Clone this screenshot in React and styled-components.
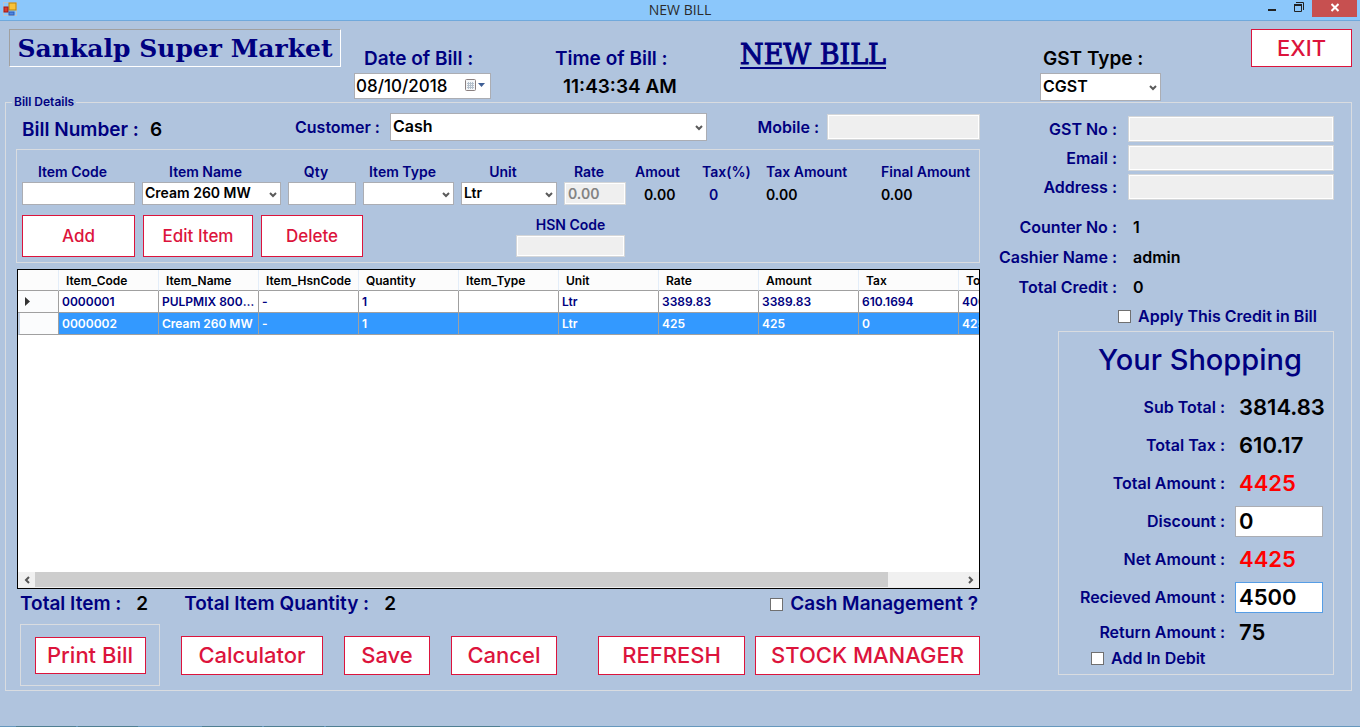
import React from "react";
import styled, { createGlobalStyle } from "styled-components";

const NAVY = "#000080";
const CRIMSON = "#dc143c";
const LINE = "#d9dce0";

const GlobalStyle = createGlobalStyle`
  * { box-sizing: border-box; }
  body { margin: 0; background: #b0c4de; }
  body, button, input, select {
    font-family: Inter, "Liberation Sans", Arial, sans-serif;
    font-weight: 600;
  }
  button, input, select { margin: 0; border-radius: 0; outline: none; }
`;

/* ---------- window frame ---------- */
const Window = styled.div`
  min-height: 100vh;
  min-width: 1200px;
  display: flex;
  flex-direction: column;
  background: #b0c4de;
  color: ${NAVY};
`;
const TitleBar = styled.div`
  height: 21px;
  display: grid;
  grid-template-columns: 1fr auto 1fr;
  background: #8bc7fb;
  border-bottom: 1px solid #70a9dc;
`;
const AppIcon = styled.svg`
  display: block;
  margin: 2px 0 0 3px;
`;
const WindowTitle = styled.span`
  font: 400 14px/20px "Open Sans", "Noto Sans", sans-serif;
  color: #2b2b2b;
`;
const WindowButtons = styled.div`
  justify-self: end;
  display: flex;
  padding-right: 3px;
`;
const WindowButton = styled.button`
  width: ${(p) => (p.$close ? 45 : 27)}px;
  height: 17px;
  padding: 0;
  border: 0;
  display: flex;
  justify-content: center;
  background: ${(p) => (p.$close ? "#c75050" : "transparent")};
`;
const TaskEdge = styled.div`
  height: 1px;
  margin-top: auto;
  background: linear-gradient(
    90deg,
    #6698bd 16px, #4f7f93 16px 76px, #6698bd 76px 78px, #4f7f93 78px 138px,
    #6698bd 138px 202px, #4f7f93 202px 262px, #6698bd 262px 264px,
    #4f7f93 264px 324px, #6698bd 324px 326px, #4f7f93 326px 500px, #6698bd 500px
  );
`;

/* ---------- shared controls ---------- */
const Caption = styled.label`
  font-size: ${(p) => p.$size || 16}px;
  line-height: 20px;
  white-space: nowrap;
  color: ${(p) => (p.$dark ? "#000" : NAVY)};
`;
const Value = styled.output`
  font-size: ${(p) => p.$size || 16}px;
  line-height: 20px;
  white-space: nowrap;
  color: ${(p) => p.$color || "#000"};
`;
const TextBox = styled.input`
  width: ${(p) => (p.$w ? p.$w + "px" : "100%")};
  height: ${(p) => p.$h || 26}px;
  min-width: 0;
  padding: 0 3px;
  border: 1px solid #abadb3;
  background: #fff;
  color: #000;
  font-size: ${(p) => p.$size || 14}px;
  &:disabled {
    border-color: #d4d6d8;
    background: #efefef;
    box-shadow: inset 0 0 0 1px #fff;
    color: #838383;
  }
`;
const FocusBox = styled(TextBox)`
  border-color: #569de5;
`;
const SelectWrap = styled.div`
  position: relative;
  width: ${(p) => (p.$w ? p.$w + "px" : "100%")};
  height: ${(p) => p.$h}px;
`;
const SelectBox = styled.select`
  appearance: none;
  display: block;
  width: 100%;
  height: 100%;
  padding: 0 18px 2px 2px;
  border: 1px solid #abadb3;
  background: #fff;
  color: #000;
  font-size: ${(p) => p.$size}px;
`;
const Chevron = styled.svg`
  position: absolute;
  right: 4px;
  top: calc(50% - 2px);
  pointer-events: none;
`;
const RedButton = styled.button`
  width: ${(p) => p.$w}px;
  height: ${(p) => p.$h || 39}px;
  padding: 0;
  border: 1px solid ${CRIMSON};
  background: #fff;
  color: ${CRIMSON};
  font-size: ${(p) => p.$size || 22}px;
  font-weight: 500;
  white-space: nowrap;
`;
const CheckLabel = styled.label`
  display: flex;
  align-items: center;
  gap: 7px;
  font-size: ${(p) => p.$size || 16}px;
  line-height: 20px;
  white-space: nowrap;
`;
const CheckBox = styled.input`
  appearance: none;
  width: 13px;
  height: 13px;
  border: 1px solid #707070;
  background: #fff;
  &:checked { background: ${NAVY}; }
`;

function Select({ id, w, h, size, value }) {
  return (
    <SelectWrap $w={w} $h={h}>
      <SelectBox id={id} $size={size} defaultValue={value}>
        <option>{value}</option>
      </SelectBox>
      <Chevron width="8" height="6" viewBox="0 0 8 6">
        <path d="M1 1 L4 4 L7 1" fill="none" stroke="#5a5a5a" strokeWidth="2" />
      </Chevron>
    </SelectWrap>
  );
}

function Check({ size, children }) {
  return (
    <CheckLabel $size={size}>
      <CheckBox type="checkbox" />
      {children}
    </CheckLabel>
  );
}

/* ---------- header ---------- */
const Header = styled.header`
  display: flex;
  align-items: flex-start;
  height: 79px;
  padding: 8px 8px 0 9px;
`;
const ShopName = styled.div`
  width: 332px;
  height: 38px;
  border: 1px solid #a0a0a0;
  border-right-color: #fff;
  border-bottom-color: #fff;
  text-align: center;
  font: 700 25px/38px "DejaVu Serif", serif;
  white-space: nowrap;
`;
const HeaderField = styled.div`
  display: flex;
  flex-direction: column;
  padding-top: 20px;
  gap: ${(p) => p.$gap || 4}px;
  margin-left: ${(p) => p.$left};
`;
const Indent = styled.div`
  padding-left: ${(p) => p.$by}px;
  display: flex;
`;
const DateBox = styled.div`
  display: flex;
  align-items: center;
  width: 137px;
  height: 26px;
  border: 1px solid #abadb3;
  background: #fff;
`;
const DateInput = styled.input`
  flex: 1;
  min-width: 0;
  padding: 0 0 0 1px;
  border: 0;
  background: none;
  color: #000;
  font-size: 17px;
  font-weight: 500;
`;
const DateButton = styled.button`
  padding: 0 5px 0 0;
  border: 0;
  background: none;
  display: flex;
`;
const PageTitle = styled.h1`
  margin: 10px 0 0 62px;
  font: 400 27px/32px "DejaVu Serif", serif;
  text-decoration: underline;
  text-decoration-thickness: 2px;
  text-underline-offset: 3px;
  white-space: nowrap;
  -webkit-text-stroke: 1px ${NAVY};
`;
const TimeField = styled(HeaderField)`
  width: 123px;
`;
const ExitSlot = styled.div`
  margin-left: 90px;
`;

/* ---------- bill details ---------- */
const Details = styled.fieldset`
  min-width: 0;
  margin: -5px 8px 0 5px;
  padding: 3px 17px 4px 10px;
  border: 1px solid ${LINE};
`;
const Legend = styled.legend`
  margin-left: -4px;
  padding: 0 2px 0 2px;
  font-size: 12px;
  line-height: 14px;
`;
const Columns = styled.div`
  display: grid;
  grid-template-columns: minmax(0, 1fr) 346px;
  gap: 8px;
`;
const Main = styled.div`
  display: flex;
  flex-direction: column;
  min-width: 0;
`;
const BillRow = styled.div`
  display: flex;
  align-items: center;
  gap: 8px;
  height: 30px;
  padding-left: 6px;
`;
const BillNumber = styled.div`
  display: flex;
  gap: 11px;
  width: 265px;
  padding-top: 6px;
`;
const CustomerCaption = styled(Caption)`
  width: 87px;
`;
const PushRight = styled.div`
  display: flex;
  align-items: center;
  gap: ${(p) => p.$gap || 8}px;
  margin-left: auto;
`;
const Entry = styled.section`
  margin-top: 7px;
  padding: 12px 5px 5px;
  border: 1px solid ${LINE};
`;
const EntryFields = styled.div`
  display: grid;
  grid-template-columns: 113px 139px 68px 91px 96px 62px 60px 57px 108px 1fr;
  gap: 7px;
`;
const EntryField = styled.div`
  display: flex;
  flex-direction: column;
  align-items: ${(p) => (p.$plain ? "flex-start" : "center")};
  min-width: 0;
  ${Caption} {
    padding-right: ${(p) => (p.$plain ? 0 : 12)}px;
    padding-left: ${(p) => (p.$plain ? 2 : 0)}px;
  }
`;
const PlainValue = styled(Value)`
  padding: 3px 0 0 ${(p) => p.$indent || 2}px;
`;
const EntryActions = styled.div`
  display: flex;
  align-items: flex-end;
  gap: 8px;
  margin-top: 10px;
`;
const HsnField = styled.div`
  display: flex;
  flex-direction: column;
  align-items: center;
  width: 109px;
  margin-left: 145px;
`;

const GridView = styled.div`
  display: flex;
  flex-direction: column;
  min-height: 320px;
  margin: 6px 0 0 1px;
  border: 1px solid #000;
  background: #fff;
  overflow: hidden;
`;
const GridArea = styled.div`
  flex: 1;
  overflow: hidden;
`;
const Table = styled.table`
  width: 1041px;
  table-layout: fixed;
  border-collapse: separate;
  border-spacing: 0;
  font-size: 12px;
`;
const HeadCell = styled.th`
  width: ${(p) => (p.$stub ? 41 : 100)}px;
  height: 21px;
  padding: 0 7px;
  border-right: 1px solid #e3edf8;
  border-bottom: 1px solid #a0a0a0;
  background: #fcfcfc;
  color: #000;
  font-weight: 600;
  text-align: left;
  white-space: nowrap;
`;
const Row = styled.tr`
  color: ${(p) => (p.$selected ? "#fff" : NAVY)};
  background: ${(p) => (p.$selected ? "#3399ff" : "#fff")};
`;
const Cell = styled.td`
  height: 22px;
  padding: 0 2px 0 3px;
  border-right: 1px solid #a0a0a0;
  border-bottom: 1px solid #a0a0a0;
  overflow: hidden;
  text-overflow: ellipsis;
  white-space: nowrap;
`;
const StubCell = styled(Cell)`
  padding-left: 6px;
  background: #fbfcfd;
  border-left: ${(p) => (p.$selected ? "2px solid #c5d3e6" : "0")};
`;
const ScrollBar = styled.div`
  display: grid;
  grid-template-columns: 17px 1fr 17px;
  height: 16px;
  background: #f0f0f0;
`;
const ScrollButton = styled.button`
  padding: 0;
  border: 0;
  background: none;
  display: flex;
  align-items: center;
  justify-content: center;
`;
const ScrollThumb = styled.div`
  width: 92%;
  height: 15px;
  background: #cdcdcd;
`;

const Totals = styled.div`
  display: flex;
  align-items: center;
  height: 30px;
  padding: 0 2px 0 4px;
`;
const TotalItem = styled.div`
  display: flex;
  gap: 15px;
  margin-right: 36px;
`;
const Actions = styled.div`
  display: flex;
  align-items: center;
  gap: 21px;
  margin-top: 5px;
  padding-left: 4px;
`;
const PrintPanel = styled.div`
  display: flex;
  align-items: center;
  justify-content: center;
  width: 140px;
  height: 62px;
  border: 1px solid ${LINE};
`;

/* ---------- right side ---------- */
const Side = styled.div`
  display: flex;
  flex-direction: column;
  padding-top: 4px;
`;
const ContactGrid = styled.div`
  display: grid;
  grid-template-columns: 129px 1fr;
  gap: 3px 11px;
  align-items: center;
  text-align: right;
`;
const InfoGrid = styled.div`
  display: grid;
  grid-template-columns: 129px 1fr;
  column-gap: 16px;
  grid-auto-rows: 30px;
  align-items: center;
  margin-top: 12px;
  ${Caption} { text-align: right; }
`;
const CreditCheck = styled.div`
  padding: 4px 0 3px 130px;
`;
const Shopping = styled.section`
  width: 276px;
  height: 344px;
  margin: 2px 0 0 auto;
  border: 1px solid ${LINE};
`;
const ShoppingTitle = styled.h2`
  margin: 0;
  padding-left: 8px;
  text-align: center;
  font-size: 29px;
  font-weight: 500;
  line-height: 56px;
`;
const SumRow = styled.div`
  display: grid;
  grid-template-columns: 166px 1fr;
  column-gap: 10px;
  align-items: center;
  height: ${(p) => p.$h || 38}px;
  ${Caption} { text-align: right; }
  ${Value} { padding-left: 4px; }
`;
const DebitCheck = styled.div`
  padding-left: 32px;
`;

const COLUMNS = ["Item_Code", "Item_Name", "Item_HsnCode", "Quantity", "Item_Type", "Unit", "Rate", "Amount", "Tax", "Total"];
const ROWS = [
  ["0000001", "PULPMIX 800ML", "-", "1", "", "Ltr", "3389.83", "3389.83", "610.1694", "4000"],
  ["0000002", "Cream 260 MW", "-", "1", "", "Ltr", "425", "425", "0", "425"],
];

export default function App() {
  return (
    <Window>
      <GlobalStyle />
      <TitleBar>
        <AppIcon width="15" height="15" viewBox="0 0 15 15">
          <rect x="0.5" y="0.5" width="13" height="13" fill="none" stroke="#b9c3cb" />
          <rect x="6" y="1" width="7" height="7" fill="#f8c23a" stroke="#b8860b" />
          <rect x="1" y="5" width="4" height="5" fill="#d8392b" stroke="#a01818" />
          <rect x="6" y="10" width="5" height="3" fill="#4f86e0" stroke="#2a5bb8" />
        </AppIcon>
        <WindowTitle>NEW BILL</WindowTitle>
        <WindowButtons>
          <WindowButton aria-label="Minimize">
            <svg width="8" height="17"><rect y="9" width="8" height="2" fill="#222" /></svg>
          </WindowButton>
          <WindowButton aria-label="Restore">
            <svg width="10" height="17">
              <path d="M2 2.5 H9.5 V10" fill="none" stroke="#222" />
              <path d="M0.5 4 V11.5 H7.5 V4" fill="none" stroke="#222" />
              <path d="M0 5 H8" stroke="#222" strokeWidth="2" />
            </svg>
          </WindowButton>
          <WindowButton $close aria-label="Close">
            <svg width="8" height="17"><path d="M0.5 4 L7.5 11 M7.5 4 L0.5 11" stroke="#fff" strokeWidth="2" /></svg>
          </WindowButton>
        </WindowButtons>
      </TitleBar>

      <Header>
        <ShopName>Sankalp Super Market</ShopName>
        <HeaderField $left="13px">
          <Indent $by={10}><Caption $size={19} htmlFor="date">Date of Bill :</Caption></Indent>
          <DateBox>
            <DateInput id="date" defaultValue="08/10/2018" />
            <DateButton aria-label="Open calendar">
              <svg width="20" height="14" viewBox="0 0 20 14">
                <rect x="0.5" y="0.5" width="10" height="11" rx="1" fill="#f4f6f8" stroke="#8a8080" />
                <path d="M2 4.5 H9 M2 6.5 H9 M2 8.5 H9 M3.5 3 V10 M5.5 3 V10 M7.5 3 V10" stroke="#b4c0cc" />
                <path d="M13 4 H20 L16.5 8 Z" fill="#3f5f96" />
              </svg>
            </DateButton>
          </DateBox>
        </HeaderField>
        <TimeField $left="64px" $gap={8}>
          <Caption $size={19} as="span">Time of Bill :</Caption>
          <Indent $by={8}><Value $size={19}>11:43:34 AM</Value></Indent>
        </TimeField>
        <PageTitle>NEW BILL</PageTitle>
        <HeaderField $left="auto">
          <Indent $by={3}><Caption $size={19} $dark htmlFor="gst">GST Type :</Caption></Indent>
          <Select id="gst" w={121} h={28} size={16} value="CGST" />
        </HeaderField>
        <ExitSlot><RedButton $w={101} $h={38}>EXIT</RedButton></ExitSlot>
      </Header>

      <Details>
        <Legend>Bill Details</Legend>
        <Columns>
          <Main>
            <BillRow>
              <BillNumber>
                <Caption as="span" $size={19}>Bill Number :</Caption>
                <Value $size={19}>6</Value>
              </BillNumber>
              <CustomerCaption htmlFor="customer">Customer :</CustomerCaption>
              <Select id="customer" w={317} h={28} size={16} value="Cash" />
              <PushRight>
                <Caption htmlFor="mobile">Mobile :</Caption>
                <TextBox id="mobile" $w={153} disabled />
              </PushRight>
            </BillRow>

            <Entry>
              <EntryFields>
                <EntryField><Caption $size={14} htmlFor="code">Item Code</Caption><TextBox id="code" $h={23} /></EntryField>
                <EntryField><Caption $size={14} htmlFor="name">Item Name</Caption><Select id="name" h={23} size={14} value="Cream 260 MW" /></EntryField>
                <EntryField><Caption $size={14} htmlFor="qty">Qty</Caption><TextBox id="qty" $h={23} /></EntryField>
                <EntryField><Caption $size={14} htmlFor="type">Item Type</Caption><Select id="type" h={23} size={14} value="" /></EntryField>
                <EntryField><Caption $size={14} htmlFor="unit">Unit</Caption><Select id="unit" h={23} size={14} value="Ltr" /></EntryField>
                <EntryField><Caption $size={14} htmlFor="rate">Rate</Caption><TextBox id="rate" $h={23} defaultValue="0.00" disabled /></EntryField>
                <EntryField $plain><Caption as="span" $size={14}>Amout</Caption><PlainValue $size={14} $indent={11}>0.00</PlainValue></EntryField>
                <EntryField $plain><Caption as="span" $size={14}>Tax(%)</Caption><PlainValue $size={14} $indent={9} $color={NAVY}>0</PlainValue></EntryField>
                <EntryField $plain><Caption as="span" $size={14}>Tax Amount</Caption><PlainValue $size={14}>0.00</PlainValue></EntryField>
                <EntryField $plain><Caption as="span" $size={14}>Final Amount</Caption><PlainValue $size={14}>0.00</PlainValue></EntryField>
              </EntryFields>
              <EntryActions>
                <RedButton $w={113} $h={42} $size={17}>Add</RedButton>
                <RedButton $w={110} $h={42} $size={17}>Edit Item</RedButton>
                <RedButton $w={102} $h={42} $size={17}>Delete</RedButton>
                <HsnField>
                  <Caption $size={14} htmlFor="hsn">HSN Code</Caption>
                  <TextBox id="hsn" $h={22} disabled />
                </HsnField>
              </EntryActions>
            </Entry>

            <GridView>
              <GridArea>
                <Table>
                  <thead>
                    <tr>
                      <HeadCell $stub />
                      {COLUMNS.map((c) => <HeadCell key={c}>{c}</HeadCell>)}
                    </tr>
                  </thead>
                  <tbody>
                    {ROWS.map((r, i) => (
                      <Row key={r[0]} $selected={i === 1}>
                        <StubCell $selected={i === 1}>
                          {i === 0 && <svg width="6" height="9"><path d="M1 0 L6 4.5 L1 9 Z" fill="#333" /></svg>}
                        </StubCell>
                        {r.map((v, j) => <Cell key={j}>{v}</Cell>)}
                      </Row>
                    ))}
                  </tbody>
                </Table>
              </GridArea>
              <ScrollBar>
                <ScrollButton aria-label="Scroll left">
                  <svg width="6" height="8"><path d="M5 1 L2 4 L5 7" fill="none" stroke="#555" strokeWidth="2" /></svg>
                </ScrollButton>
                <ScrollThumb />
                <ScrollButton aria-label="Scroll right">
                  <svg width="6" height="8"><path d="M1 1 L4 4 L1 7" fill="none" stroke="#555" strokeWidth="2" /></svg>
                </ScrollButton>
              </ScrollBar>
            </GridView>

            <Totals>
              <TotalItem><Caption as="span" $size={19}>Total Item :</Caption><Value $size={19}>2</Value></TotalItem>
              <TotalItem><Caption as="span" $size={19}>Total Item Quantity :</Caption><Value $size={19}>2</Value></TotalItem>
              <PushRight><Check size={19}>Cash Management ?</Check></PushRight>
            </Totals>

            <Actions>
              <PrintPanel><RedButton $w={111} $h={37}>Print Bill</RedButton></PrintPanel>
              <RedButton $w={142}>Calculator</RedButton>
              <RedButton $w={86}>Save</RedButton>
              <RedButton $w={106}>Cancel</RedButton>
              <PushRight $gap={10}>
                <RedButton $w={147}>REFRESH</RedButton>
                <RedButton $w={225}>STOCK MANAGER</RedButton>
              </PushRight>
            </Actions>
          </Main>

          <Side>
            <ContactGrid>
              <Caption htmlFor="gstno">GST No :</Caption><TextBox id="gstno" disabled />
              <Caption htmlFor="email">Email :</Caption><TextBox id="email" disabled />
              <Caption htmlFor="address">Address :</Caption><TextBox id="address" disabled />
            </ContactGrid>
            <InfoGrid>
              <Caption as="span">Counter No :</Caption><Value>1</Value>
              <Caption as="span">Cashier Name :</Caption><Value>admin</Value>
              <Caption as="span">Total Credit :</Caption><Value>0</Value>
            </InfoGrid>
            <CreditCheck><Check>Apply This Credit in Bill</Check></CreditCheck>
            <Shopping>
              <ShoppingTitle>Your Shopping</ShoppingTitle>
              <SumRow><Caption as="span">Sub Total :</Caption><Value $size={22}>3814.83</Value></SumRow>
              <SumRow><Caption as="span">Total Tax :</Caption><Value $size={22}>610.17</Value></SumRow>
              <SumRow><Caption as="span">Total Amount :</Caption><Value $size={22} $color="#f00">4425</Value></SumRow>
              <SumRow><Caption htmlFor="discount">Discount :</Caption><TextBox id="discount" $w={88} $h={31} $size={22} defaultValue="0" /></SumRow>
              <SumRow><Caption as="span">Net Amount :</Caption><Value $size={22} $color="#f00">4425</Value></SumRow>
              <SumRow><Caption htmlFor="received">Recieved Amount :</Caption><FocusBox id="received" $w={88} $h={31} $size={22} defaultValue="4500" /></SumRow>
              <SumRow $h={32}><Caption as="span">Return Amount :</Caption><Value $size={22}>75</Value></SumRow>
              <DebitCheck><Check>Add In Debit</Check></DebitCheck>
            </Shopping>
          </Side>
        </Columns>
      </Details>
      <TaskEdge />
    </Window>
  );
}
